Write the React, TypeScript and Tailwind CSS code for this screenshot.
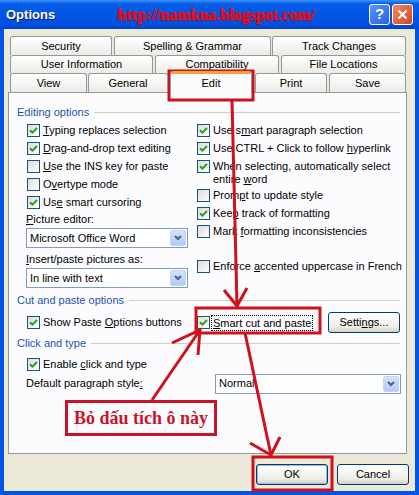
import React from 'react';

const U = ({ children }: { children: React.ReactNode }) => (
  <span className="underline underline-offset-[1px]">{children}</span>
);

function Check({ checked }: { checked: boolean }) {
  return (
    <span className="w-[13px] h-[13px] shrink-0 border border-[#1c5180] bg-[linear-gradient(135deg,#dcdcd7,#ffffff)] flex items-center justify-center">
      {checked && (
        <svg width="9" height="9" viewBox="0 0 9 9">
          <path d="M1 4.2 L3.4 6.6 L8 2" stroke="#21a121" strokeWidth="2" fill="none" />
        </svg>
      )}
    </span>
  );
}

function Row({ checked, children, className = '' }: { checked: boolean; children: React.ReactNode; className?: string }) {
  return (
    <div className={`h-[18px] flex items-center gap-[3px] ${className}`}>
      <Check checked={checked} />
      <span className="whitespace-nowrap">{children}</span>
    </div>
  );
}

function Group({ title }: { title: string }) {
  return (
    <div className="h-[13px] flex items-center gap-[5px] pr-[4px]">
      <span className="text-[#2354a8] whitespace-nowrap">{title}</span>
      <span className="flex-1 h-px bg-[#d0d0bf]" />
    </div>
  );
}

function Select({ value, className = '' }: { value: string; className?: string }) {
  return (
    <div className={`h-[20px] border border-[#7f9db9] bg-white flex items-center p-[1px] ${className}`}>
      <span className="flex-1 pl-[2px] whitespace-nowrap">{value}</span>
      <span className="w-[16px] h-full rounded-[2px] bg-[linear-gradient(180deg,#d5e2fc,#b4c9f6)] border border-[#c3d3fd] flex items-center justify-center">
        <svg width="8" height="6" viewBox="0 0 8 6">
          <path d="M1 1 L4 4 L7 1" stroke="#4d6185" strokeWidth="2" fill="none" />
        </svg>
      </span>
    </div>
  );
}

function Btn({ children, className = '' }: { children: React.ReactNode; className?: string }) {
  return (
    <div className={`h-[21px] rounded-[3px] border border-[#003c74] bg-[linear-gradient(180deg,#ffffff,#f0f0ea_70%,#d6d0c5)] flex items-center justify-center ${className}`}>
      {children}
    </div>
  );
}

function Tab({ label, w, className = '' }: { label: string; w: string; className?: string }) {
  return (
    <div className={`${w} h-full rounded-t-[3px] border border-b-0 border-[#919b9c] bg-[linear-gradient(180deg,#ffffff,#ecebe6)] flex items-center justify-center ${className}`}>
      {label}
    </div>
  );
}

export default function App() {
  return (
    <div className="w-[419px] h-[495px] relative bg-[#0055e5] flex flex-col text-[11px] text-black font-['Liberation_Sans',Arial,sans-serif] overflow-hidden">
      {/* Title bar */}
      <div className="h-[29px] shrink-0 flex items-center px-[6px] bg-[linear-gradient(180deg,#3d95ff_0%,#0a5fe8_12%,#0055e5_45%,#0050e0_85%,#0041c8_100%)]">
        <span className="text-white font-bold text-[13px] [text-shadow:1px_1px_0_#0a1e6b]">Options</span>
        <span className="ml-[62px] text-[#e8101c] font-bold text-[16px] font-['Liberation_Serif',serif] [text-shadow:1px_1px_0_#a0101a]">
          http://namkna.blogspot.com/
        </span>
        <div className="ml-auto flex gap-[2px]">
          <div className="w-[21px] h-[21px] rounded-[3px] border border-white bg-[linear-gradient(135deg,#5b93ff,#2560e8)] flex items-center justify-center text-white font-bold text-[15px]">
            ?
          </div>
          <div className="w-[21px] h-[21px] rounded-[3px] border border-white bg-[linear-gradient(135deg,#f08a64,#d5441c)] flex items-center justify-center">
            <svg width="11" height="11" viewBox="0 0 11 11">
              <path d="M1.5 1.5 L9.5 9.5 M9.5 1.5 L1.5 9.5" stroke="white" strokeWidth="2.2" />
            </svg>
          </div>
        </div>
      </div>

      {/* Body */}
      <div className="flex-1 mx-[4px] mb-[4px] bg-[#ece9d8] flex flex-col">
        {/* Tabs */}
        <div className="pt-[7px] pl-[6px] flex flex-col">
          <div className="h-[19px] flex">
            <Tab label="Security" w="w-[102px]" />
            <Tab label="Spelling & Grammar" w="w-[157px]" className="ml-[2px]" />
            <Tab label="Track Changes" w="w-[134px]" className="ml-[1px]" />
          </div>
          <div className="h-[18px] flex">
            <Tab label="User Information" w="w-[143px]" />
            <Tab label="Compatibility" w="w-[124px]" className="ml-[2px]" />
            <Tab label="File Locations" w="w-[125px]" className="ml-[2px]" />
          </div>
          <div className="h-[19px] flex relative z-10">
            <Tab label="View" w="w-[77px]" />
            <Tab label="General" w="w-[80px]" className="ml-[1px]" />
            <div className="w-[82px] ml-[2px] -mt-[2px] h-[22px] rounded-t-[3px] border border-b-0 border-[#919b9c] border-t-[3px] border-t-[#f2a43a] bg-[#fcfcfe] flex items-center justify-center">
              Edit
            </div>
            <Tab label="Print" w="w-[72px]" className="ml-[3px]" />
            <Tab label="Save" w="w-[77px]" className="ml-[2px]" />
          </div>
        </div>

        {/* Panel */}
        <div className="ml-[4px] w-[399px] h-[362px] border border-[#919b9c] bg-[#fcfcfe] pl-[8px] pr-[2px] flex flex-col">
          <div className="mt-[13px]">
            <Group title="Editing options" />
          </div>
          <div className="flex mt-[2px]">
            <div className="w-[180px] shrink-0 pl-[10px] flex flex-col">
              <Row checked><U>T</U>yping replaces selection</Row>
              <Row checked><U>D</U>rag-and-drop text editing</Row>
              <Row checked={false}><U>U</U>se the INS key for paste</Row>
              <Row checked={false}>O<U>v</U>ertype mode</Row>
              <Row checked>Us<U>e</U> smart cursoring</Row>
              <div className="h-[14px] mt-[1px] -ml-[1px] flex items-center"><U>P</U>icture editor:</div>
              <Select value="Microsoft Office Word" className="mt-[2px] -ml-[1px] w-[162px]" />
              <div className="h-[14px] mt-[4px] -ml-[1px] flex items-center"><U>I</U>nsert/paste pictures as:</div>
              <Select value="In line with text" className="mt-[2px] -ml-[1px] w-[162px]" />
            </div>
            <div className="flex-1 flex flex-col">
              <Row checked>Use s<U>m</U>art paragraph selection</Row>
              <Row checked>Use CTRL + Click to follow <U>h</U>yperlink</Row>
              <div className="flex gap-[3px] pt-[3px] h-[29px] leading-[13px]">
                <Check checked />
                <span>
                  When selecting, automatically select
                  <br />
                  entire <U>w</U>ord
                </span>
              </div>
              <Row checked={false}>Prom<U>p</U>t to update style</Row>
              <Row checked>Kee<U>p</U> track of formatting</Row>
              <Row checked={false}>Mark <U>f</U>ormatting inconsistencies</Row>
              <Row checked={false} className="mt-[17px]">Enforce <U>a</U>ccented uppercase in French</Row>
            </div>
          </div>

          <div className="mt-[6px]">
            <Group title="Cut and paste options" />
          </div>
          <div className="flex mt-[5px] h-[21px] items-center">
            <div className="w-[180px] shrink-0 pl-[10px]">
              <Row checked>Show Paste <U>O</U>ptions buttons</Row>
            </div>
            <div className="flex items-center gap-[1px]">
              <Check checked />
              <span className="border border-dotted border-black px-[1px] leading-[14px]"><U>S</U>mart cut and paste</span>
            </div>
            <Btn className="ml-auto mr-[4px] w-[72px]">Setti<U>n</U>gs...</Btn>
          </div>

          <div className="mt-[4px]">
            <Group title="Click and type" />
          </div>
          <div className="pl-[10px] mt-[5px]">
            <Row checked>Enable <U>c</U>lick and type</Row>
          </div>
          <div className="flex items-center h-[21px]">
            <span className="pl-[9px] w-[198px] shrink-0">Default paragraph style<U>:</U></span>
            <Select value="Normal" className="w-[186px]" />
          </div>
        </div>

        {/* Buttons */}
        <div className="flex justify-end gap-[9px] pr-[6px] mt-[10px]">
          <Btn className="w-[72px] shadow-[inset_0_0_0_1px_#98b8ea]">OK</Btn>
          <Btn className="w-[72px]">Cancel</Btn>
        </div>
      </div>

      {/* Annotation label */}
      <div className="absolute left-[65px] top-[400px] w-[152px] h-[36px] border-[3px] border-[#c8142a] bg-[#fcfcfe] flex items-center justify-center text-[#c8142a] font-bold text-[18px] font-['Liberation_Serif',serif]">
        Bỏ dấu tích ô này
      </div>

      {/* Red annotation marks */}
      <svg className="absolute left-0 top-0 pointer-events-none" width="419" height="495" viewBox="0 0 419 495">
        <g stroke="#d0101c" strokeWidth="3" fill="none">
          <rect x="169" y="71" width="84" height="29" />
          <rect x="196" y="308" width="124" height="25" />
          <rect x="253" y="457" width="79" height="33" />
          <path d="M232 100 L237 306" />
          <path d="M224 290 L237 306 L247 288" />
          <path d="M152 400 L200 330" />
          <path d="M172 343 L200 330 L198 355" />
          <path d="M245 333 L271 455" />
          <path d="M250 443 L271 455 L280 437" />
        </g>
      </svg>
    </div>
  );
}
